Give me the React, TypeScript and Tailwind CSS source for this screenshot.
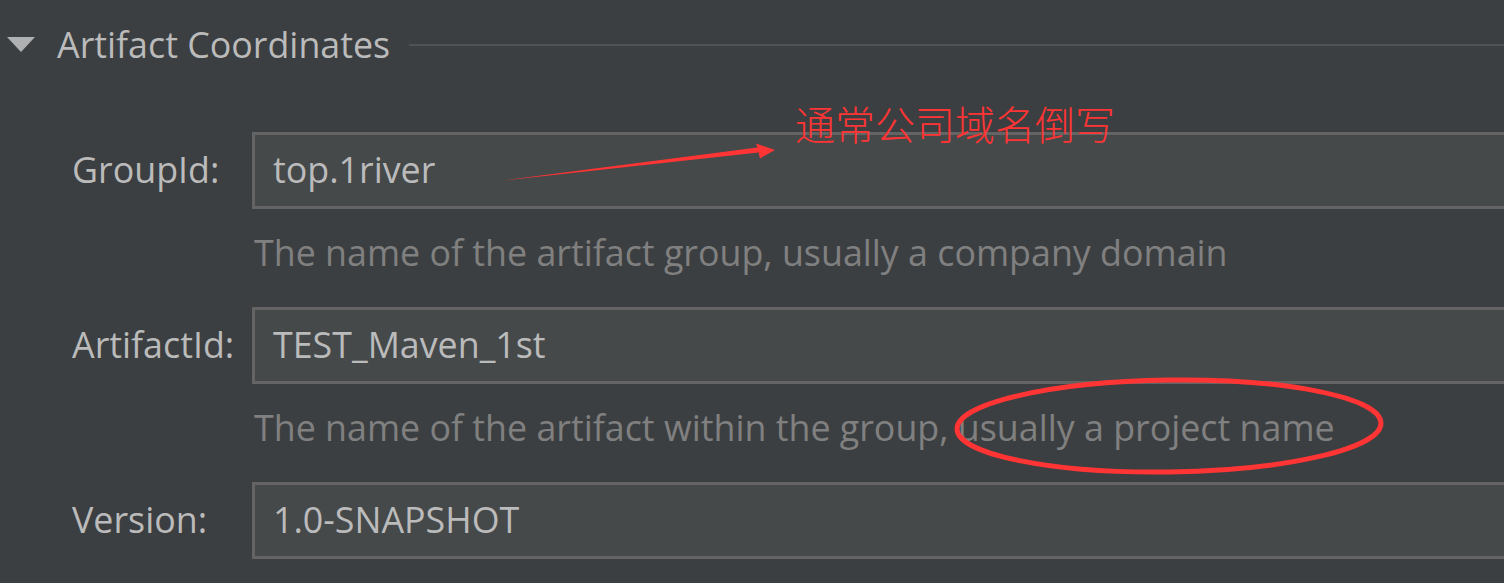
import React from "react";

type Field = { label: string; value: string; hint?: string };

const fields: Field[] = [
  {
    label: "GroupId:",
    value: "top.1river",
    hint: "The name of the artifact group, usually a company domain",
  },
  {
    label: "ArtifactId:",
    value: "TEST_Maven_1st",
    hint: "The name of the artifact within the group, usually a project name",
  },
  { label: "Version:", value: "1.0-SNAPSHOT" },
];

function Row({ f }: { f: Field }) {
  return (
    <div className="flex flex-col">
      <div className="flex items-start h-[77px]">
        <div className="w-[252px] pl-[72px] pt-[13px] text-[#bbbbbb]">{f.label}</div>
        <div className="flex-1 -mr-[40px] h-[77px] border-[3px] border-[#646464] bg-[#45494a] pl-[18px] pt-[10px] text-[#bbbbbb]">
          {f.value}
        </div>
      </div>
      {f.hint && (
        <div className="pl-[254px] pt-[19px] pb-[30px] text-[#808080] whitespace-nowrap">{f.hint}</div>
      )}
    </div>
  );
}

export default function App() {
  return (
    <div className="relative w-full h-[583px] overflow-hidden bg-[#3c3f41] font-['Open_Sans',sans-serif] text-[35.8px] leading-[49px]">
      <div className="flex items-center pt-[20px]">
        <svg className="ml-[7px] shrink-0" width="28" height="15" viewBox="0 0 28 15">
          <polygon points="0,0 28,0 14,15" fill="#afb1b3" />
        </svg>
        <div className="ml-[22px] text-[#bbbbbb] whitespace-nowrap">Artifact Coordinates</div>
        <div className="flex-1 ml-[19px] h-[2px] bg-[#505254]" />
      </div>
      <div className="mt-[63px] flex flex-col">
        {fields.map((f) => (
          <Row key={f.label} f={f} />
        ))}
      </div>

      <div className="absolute left-[795px] top-[103px] text-[40px] leading-none font-light text-[#ff3434] whitespace-nowrap font-['Noto_Sans_CJK_SC',sans-serif]">
        通常公司域名倒写
      </div>
      <svg className="absolute left-0 top-0 pointer-events-none" width="1504" height="583" viewBox="0 0 1504 583">
        <polygon points="503,180.5 757.5,147.5 756,143.5 775,150 760,158.5 758.5,152.5" fill="#ff3434" />
        <ellipse
          cx="1169"
          cy="426"
          rx="212"
          ry="46"
          fill="none"
          stroke="#ff3434"
          strokeWidth="5"
          transform="rotate(-0.8 1169 426)"
        />
      </svg>
    </div>
  );
}
